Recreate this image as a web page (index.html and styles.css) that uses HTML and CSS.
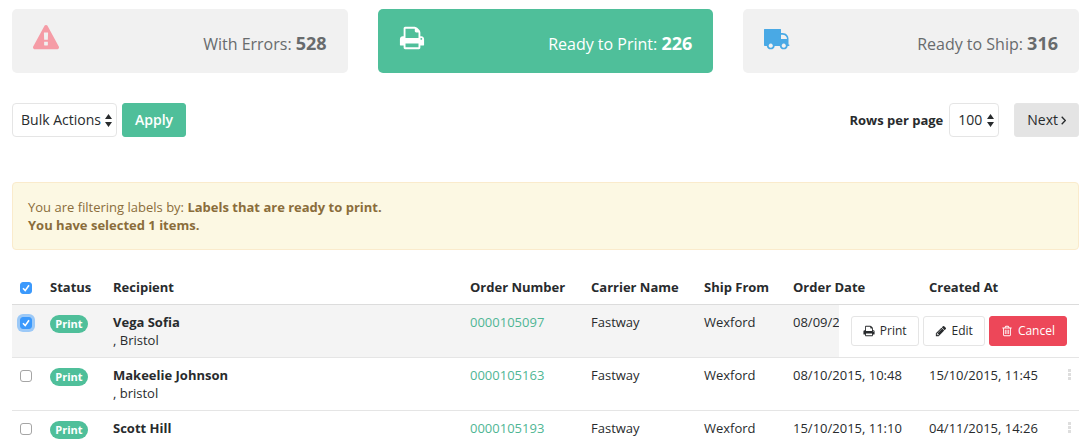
FILE: index.html
```html
<!DOCTYPE html>
<html lang="en">
<head>
<meta charset="utf-8">
<title>Labels</title>
<link rel="stylesheet" href="styles.css">
</head>
<body>
<svg class="sprite" aria-hidden="true">
  <symbol id="i-warning" viewBox="0 0 1792 1792"><path d="M1024 1375v-190q0-14-9.500-23.500t-22.500-9.500h-192q-13 0-22.500 9.500t-9.500 23.500v190q0 14 9.500 23.500t22.500 9.500h192q13 0 22.500-9.500t9.500-23.500zm-2-374l18-459q0-12-10-19-13-11-24-11h-220q-11 0-24 11-10 7-10 21l17 457q0 10 10 16.500t24 6.500h185q14 0 23.500-6.500t10.500-16.500zm-14-934l768 1408q35 63-2 126-17 29-46.500 46t-63.500 17h-1536q-34 0-63.500-17t-46.500-46q-37-63-2-126l768-1408q17-31 47-49t65-18 65 18 47 49z"/></symbol>
  <symbol id="i-print" viewBox="0 0 1792 1792"><path d="M448 1536h896v-256h-896v256zm0-640h896v-384h-160q-40 0-68-28t-28-68v-160h-640v640zm1152 64q0-26-19-45t-45-19-45 19-19 45 19 45 45 19 45-19 19-45zm128 0v416q0 13-9.500 22.500t-22.500 9.500h-224v160q0 40-28 68t-68 28h-960q-40 0-68-28t-28-68v-160h-224q-13 0-22.500-9.500t-9.500-22.500v-416q0-79 56.500-135.500t135.500-56.500h64v-544q0-40 28-68t68-28h672q40 0 88 20t76 48l152 152q28 28 48 76t20 88v256h64q79 0 135.500 56.500t56.500 135.500z"/></symbol>
  <symbol id="i-truck" viewBox="1 0 26 26"><path fill-rule="evenodd" d="M1.500 4H17.500Q18 4 18 4.500V8H19.500C23.500 8 25.500 11 25.500 14V19.500H26.300V21H24.700A4 4 0 0 1 16.800 21H11.700A4 4 0 0 1 3.800 21H1.800Q1 21 1 20.200V4.500Q1 4 1.500 4ZM18 9.800V14H24C24 11.500 22 9.800 19.500 9.800ZM7.750 18.600a2.100 2.100 0 1 0 .01 0ZM20.750 18.600a2.100 2.100 0 1 0 .01 0Z"/></symbol>
  <symbol id="i-pencil" viewBox="0 0 1792 1792"><path d="M491 1536l91-91-235-235-91 91v107h128v128h107zm523-928q0-22-22-22-10 0-17 7l-542 542q-7 7-7 17 0 22 22 22 10 0 17-7l542-542q7-7 7-17zm-54-192l416 416-832 832h-416v-416zm683 96q0 53-37 90l-166 166-416-416 166-165q36-38 90-38 53 0 91 38l235 234q37 39 37 91z"/></symbol>
  <symbol id="i-trash" viewBox="0 0 1792 1792"><path d="M704 736v576q0 14-9 23t-23 9h-64q-14 0-23-9t-9-23v-576q0-14 9-23t23-9h64q14 0 23 9t9 23zm256 0v576q0 14-9 23t-23 9h-64q-14 0-23-9t-9-23v-576q0-14 9-23t23-9h64q14 0 23 9t9 23zm256 0v576q0 14-9 23t-23 9h-64q-14 0-23-9t-9-23v-576q0-14 9-23t23-9h64q14 0 23 9t9 23zm128 724v-948h-896v948q0 22 7 40.500t14.500 27 10.500 8.500h832q3 0 10.500-8.500t14.500-27 7-40.500zm-672-1076h448l-48-117q-7-9-17-11h-317q-10 2-17 11zm928 32v64q0 14-9 23t-23 9h-96v948q0 83-47 143.500t-113 60.500h-832q-66 0-113-58.500t-47-141.500v-952h-96q-14 0-23-9t-9-23v-64q0-14 9-23t23-9h309l70-167q15-37 54-63t79-26h320q40 0 79 26t54 63l70 167h309q14 0 23 9t9 23z"/></symbol>
  <symbol id="i-sort" viewBox="0 0 7 13"><path d="M3.500 0L7 5H0zM3.500 13L0 8h7z"/></symbol>
  <symbol id="i-angle" viewBox="0 0 5 9"><path d="M.7 .7L4.300 4.500.7 8.300" fill="none" stroke="currentColor" stroke-width="1.300"/></symbol>
  <symbol id="i-dots" viewBox="0 0 3 11"><path d="M0 0h3v3H0zM0 4h3v3H0zM0 8h3v3H0z"/></symbol>
</svg>

<main class="page">
  <nav class="cards">
    <a class="card" href="#"><svg class="card-icon icon-error"><use href="#i-warning"/></svg><span class="card-text">With Errors: <b>528</b></span></a>
    <a class="card card-active" href="#"><svg class="card-icon"><use href="#i-print"/></svg><span class="card-text">Ready to Print: <b>226</b></span></a>
    <a class="card" href="#"><svg class="card-icon icon-ship"><use href="#i-truck"/></svg><span class="card-text">Ready to Ship: <b>316</b></span></a>
  </nav>

  <div class="toolbar">
    <form class="bulk">
      <span class="select-wrap"><select class="select" aria-label="Bulk Actions"><option>Bulk Actions</option></select><svg class="sort"><use href="#i-sort"/></svg></span>
      <button class="btn btn-apply" type="button">Apply</button>
    </form>
    <div class="pager">
      <label class="pager-label" for="rows">Rows per page</label>
      <span class="select-wrap"><select class="select" id="rows"><option>100</option></select><svg class="sort"><use href="#i-sort"/></svg></span>
      <button class="btn btn-next" type="button">Next<svg class="angle"><use href="#i-angle"/></svg></button>
    </div>
  </div>

  <div class="alert" role="status">
    You are filtering labels by: <b>Labels that are ready to print.</b><br>
    <b>You have selected 1 items.</b>
  </div>

  <table class="labels">
    <colgroup><col class="c-check"><col class="c-status"><col><col class="c-order"><col class="c-carrier"><col class="c-ship"><col class="c-date"><col class="c-created"><col class="c-menu"></colgroup>
    <thead>
      <tr>
        <th><input class="check" type="checkbox" aria-label="Select all" checked></th>
        <th>Status</th><th>Recipient</th><th>Order Number</th><th>Carrier Name</th><th>Ship From</th><th>Order Date</th><th>Created At</th><th></th>
      </tr>
    </thead>
    <tbody>
      <tr class="selected">
        <td><input class="check check-focus" type="checkbox" aria-label="Select Vega Sofia" checked></td>
        <td><span class="badge">Print</span></td>
        <td><b>Vega Sofia</b><br>, Bristol</td>
        <td><a class="link" href="#">0000105097</a></td>
        <td>Fastway</td>
        <td>Wexford</td>
        <td>08/09/2015</td>
        <td></td>
        <td class="menu-cell">
          <div class="actions">
            <button class="action" type="button"><svg class="action-icon"><use href="#i-print"/></svg>Print</button>
            <button class="action" type="button"><svg class="action-icon"><use href="#i-pencil"/></svg>Edit</button>
            <button class="action action-cancel" type="button"><svg class="action-icon"><use href="#i-trash"/></svg>Cancel</button>
          </div>
        </td>
      </tr>
      <tr>
        <td><input class="check" type="checkbox" aria-label="Select Makeelie Johnson"></td>
        <td><span class="badge">Print</span></td>
        <td><b>Makeelie Johnson</b><br>, bristol</td>
        <td><a class="link" href="#">0000105163</a></td>
        <td>Fastway</td>
        <td>Wexford</td>
        <td>08/10/2015, 10:48</td>
        <td>15/10/2015, 11:45</td>
        <td class="menu-cell"><button class="dots" type="button" aria-label="Actions"><svg class="dots-icon"><use href="#i-dots"/></svg></button></td>
      </tr>
      <tr>
        <td><input class="check" type="checkbox" aria-label="Select Scott Hill"></td>
        <td><span class="badge">Print</span></td>
        <td><b>Scott Hill</b></td>
        <td><a class="link" href="#">0000105193</a></td>
        <td>Fastway</td>
        <td>Wexford</td>
        <td>15/10/2015, 11:10</td>
        <td>04/11/2015, 14:26</td>
        <td class="menu-cell"><button class="dots" type="button" aria-label="Actions"><svg class="dots-icon"><use href="#i-dots"/></svg></button></td>
      </tr>
    </tbody>
  </table>
</main>
</body>
</html>
```
FILE: styles.css
```css
* { box-sizing: border-box; }
body {
  margin: 0;
  background: #fff;
  color: #282b2d;
  font: 13px/18px "Open Sans", "Noto Sans", sans-serif;
}
button, select { font: inherit; color: inherit; margin: 0; }
svg { display: block; fill: currentColor; flex: none; }
b { font-weight: 700; }
.sprite { display: none; }
.page { padding: 9px 9px 0 12px; }

.cards { display: grid; grid-template-columns: repeat(3, 1fr); gap: 30px; }
.card {
  display: flex;
  justify-content: space-between;
  min-height: 64px;
  padding: 16px 21px 14px;
  border-radius: 5px;
  background: #f1f1f1;
  color: #686b6d;
  font-size: 16px;
  line-height: 30px;
  text-decoration: none;
}
.card-active { background: #4fbf9a; color: #fff; }
.card-icon { width: 26px; height: 26px; }
.icon-error { color: #f59ca6; }
.icon-ship { color: #49a9e5; }
.card-text { align-self: flex-end; }
.card-text b { font-size: 18px; }

.toolbar { display: flex; justify-content: space-between; margin: 30px 0 45px; font-size: 14px; }
.bulk, .pager { display: flex; align-items: center; }
.bulk { gap: 5px; }
.select-wrap { position: relative; display: flex; }
.select {
  appearance: none;
  height: 34px;
  padding: 0 15px 0 8px;
  border: 1px solid #e5e5e5;
  border-radius: 4px;
  background: #fff;
}
.sort { position: absolute; right: 5px; top: 11px; width: 7px; height: 13px; pointer-events: none; }
.btn { height: 34px; padding: 0 12px; border: 1px solid #e5e5e5; border-radius: 3px; }
.btn-apply { border-color: #4fbf9a; background: #4fbf9a; color: #fff; font-weight: 600; }
.btn-next { display: flex; align-items: center; gap: 3px; margin-left: 15px; background: #e4e4e4; }
.angle { width: 5px; height: 9px; }
.pager-label { margin-right: 6px; font-size: 13px; font-weight: 700; }

.alert {
  margin-bottom: 20px;
  padding: 15px;
  border: 1px solid #faebcc;
  border-radius: 4px;
  background: #fcf8e3;
  color: #8a6d3b;
}

.labels { width: 100%; border-collapse: separate; border-spacing: 0; table-layout: fixed; }
.c-check { width: 30px; }
.c-status { width: 63px; }
.c-order { width: 121px; }
.c-carrier { width: 113px; }
.c-ship { width: 89px; }
.c-date { width: 136px; }
.c-created { width: 137px; }
.c-menu { width: 21px; }
.labels th, .labels td {
  padding: 8px 0 8px 8px;
  border-bottom: 1px solid #e5e5e5;
  text-align: left;
  vertical-align: top;
  white-space: nowrap;
}
.labels th { border-color: #dcdcdc; font-weight: 700; }
.labels td { height: 53px; }
.selected { background: #f4f4f4; }
.link { color: #4fb694; text-decoration: none; }
.check {
  display: block;
  appearance: none;
  width: 12px;
  height: 12px;
  margin: 4px 0 0;
  border: 1px solid #a5a5a5;
  border-radius: 3px;
  background: #fff;
}
.check:checked {
  border-color: #3b99fc;
  background: #3b99fc url("data:image/svg+xml,%3Csvg xmlns='http://www.w3.org/2000/svg' viewBox='0 0 10 10'%3E%3Cpath d='M2 5.300L4.200 7.600 8 2.200' fill='none' stroke='white' stroke-width='1.600'/%3E%3C/svg%3E");
}
.check-focus { box-shadow: 0 0 0 3px #9cc9f7; }
.badge {
  display: block;
  width: 38px;
  margin-top: 2px;
  border-radius: 9px;
  background: #4fbf9a;
  color: #fff;
  font-size: 11px;
  font-weight: 700;
  text-align: center;
}
.labels .menu-cell { position: relative; }
.actions {
  position: absolute;
  top: 0;
  right: 0;
  bottom: 0;
  display: flex;
  align-items: center;
  gap: 4px;
  padding: 0 12px;
  background: #fff;
}
.action {
  display: flex;
  align-items: center;
  gap: 5px;
  height: 30px;
  padding: 0 11px;
  border: 1px solid #e5e5e5;
  border-radius: 3px;
  background: #fff;
  font-size: 12px;
}
.action-icon { width: 12px; height: 12px; }
.action-cancel { border-color: #ed4759; background: #ed4759; color: #fff; font-weight: 500; }
.dots { display: block; margin: 3px 0 0; padding: 0 2px; border: 0; background: none; color: #dedede; }
.dots-icon { width: 3px; height: 11px; }
```
